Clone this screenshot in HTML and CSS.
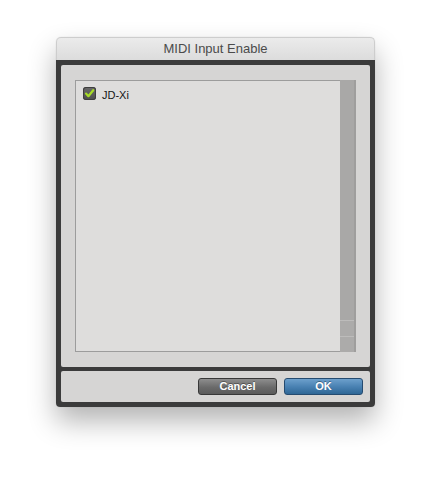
FILE: index.html
```html
<!DOCTYPE html>
<html>
<head>
<meta charset="utf-8">
<link rel="stylesheet" href="styles.css">
</head>
<body>
<div class="window">
  <div class="titlebar">MIDI Input Enable</div>
  <div class="frame">
    <div class="panel top">
      <div class="listbox">
        <div class="list">
          <div class="item">
            <span class="check">
              <svg width="13" height="13" viewBox="0 0 13 13"><path d="M3 6.6 L5.4 9.2 L10.2 3.2" fill="none" stroke="#a6dc26" stroke-width="2.2" stroke-linecap="round" stroke-linejoin="round"/></svg>
            </span>
            <span class="label">JD-Xi</span>
          </div>
        </div>
        <div class="scrollbar">
          <div class="track"></div>
          <div class="arrow"></div>
          <div class="arrow"></div>
        </div>
      </div>
    </div>
    <div class="panel bottom">
      <button class="btn cancel">Cancel</button>
      <button class="btn ok">OK</button>
    </div>
  </div>
</div>
</body>
</html>
```

FILE: styles.css
```css
html, body {
  margin: 0;
  padding: 0;
  background: #ffffff;
}
body {
  font-family: "Liberation Sans", Arial, sans-serif;
  min-height: 480px;
  padding-top: 37px;
  box-sizing: border-box;
}
.window {
  margin-left: 56px;
  width: 319px;
  border-radius: 5px 5px 4px 4px;
  box-shadow: 0 14px 28px rgba(0,0,0,0.30), 0 0 1px rgba(0,0,0,0.2);
}
.titlebar {
  height: 22px;
  line-height: 22px;
  text-align: center;
  font-size: 13px;
  color: #4b4b4b;
  background: linear-gradient(#ebebeb, #dcdcdc);
  border: 1px solid #cdcdcd;
  border-bottom: none;
  border-radius: 5px 5px 0 0;
}
.frame {
  background: #3b3b3b;
  padding: 5px;
  display: flex;
  flex-direction: column;
  gap: 4px;
  border-radius: 0 0 4px 4px;
}
.panel {
  background: #d6d5d4;
  border-radius: 2px;
}
.panel.top {
  padding: 15px 14px 15px 14px;
  height: 272px;
}
.listbox {
  display: flex;
  height: 272px;
  width: 281px;
}
.list {
  flex: 1;
  background: #dedddc;
  border-top: 1px solid #9c9c9c;
  border-left: 1px solid #9c9c9c;
  border-bottom: 1px solid #9c9c9c;
  padding: 6px 0 0 7px;
}
.item {
  display: flex;
  align-items: center;
  height: 13px;
}
.check {
  width: 13px;
  height: 13px;
  background: linear-gradient(#6a6a6a, #4e4e4e);
  border-radius: 3px;
  display: flex;
  box-shadow: inset 0 0 0 1px #3e3e3e;
}
.label {
  margin-left: 6px;
  font-size: 11px;
  color: #151515;
  position: relative;
  top: 1px;
}
.scrollbar {
  width: 14px;
  display: flex;
  flex-direction: column;
  background: #a9a8a7;
  border-right: 2px solid #9f9e9d;
}
.track {
  flex: 1;
}
.arrow {
  height: 15px;
  background: #acabaa;
  border-top: 1px solid #bdbcbb;
}
.panel.bottom {
  height: 31px;
  display: flex;
  justify-content: flex-end;
  align-items: center;
  gap: 7px;
  padding-right: 7px;
}
.btn {
  width: 79px;
  height: 17px;
  font-family: "Liberation Sans", Arial, sans-serif;
  font-weight: bold;
  font-size: 11px;
  color: #ffffff;
  border-radius: 3px;
  padding: 0;
  line-height: 15px;
  text-shadow: 0 -1px 0 rgba(0,0,0,0.35);
}
.cancel {
  background: linear-gradient(#8e8e8e, #6a6a6a 55%, #5b5b5b);
  border: 1px solid #383838;
}
.ok {
  background: linear-gradient(#6da0cc, #4a82b3 50%, #2f6796);
  border: 1px solid #254b70;
}
```
